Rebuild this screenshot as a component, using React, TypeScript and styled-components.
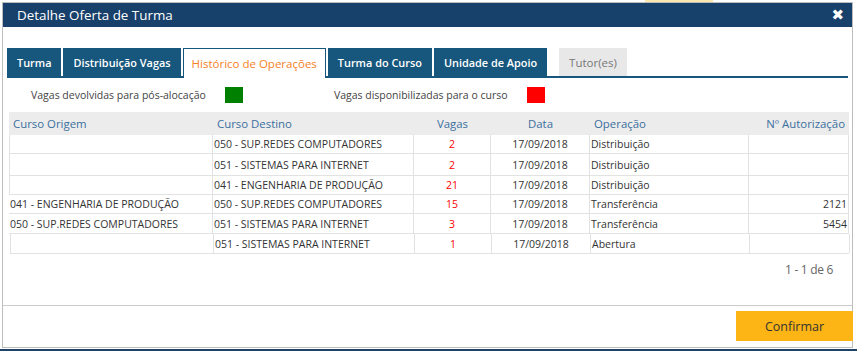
import * as React from 'react';
import styled, { createGlobalStyle, css } from 'styled-components';

const GlobalStyle = createGlobalStyle`
  html, body {
    margin: 0;
    padding: 0;
    background: #ffffff;
    font-family: "Open Sans", "Noto Sans", Arial, sans-serif;
  }
`;

const Page = styled.div`
  position: relative;
  width: 857px;
  height: 353px;
  overflow: hidden;
  padding: 2px 0 0 2px;
  box-sizing: border-box;
`;

const BackdropStrip = styled.div`
  position: absolute;
  left: 0;
  right: 0;
  bottom: 2px;
  height: 2px;
  background: #1d4468;
`;

const BackdropTab = styled.div`
  position: absolute;
  top: 0;
  left: 645px;
  width: 68px;
  height: 2px;
  background: #ffe8b0;
`;

const Dialog = styled.div`
  position: relative;
  width: 851px;
  height: 346px;
  box-sizing: border-box;
  border: 1px solid #bdbdbd;
  background: #ffffff;
  display: flex;
  flex-direction: column;
`;

const TitleBar = styled.div`
  height: 24px;
  background: #17406a;
  color: #ffffff;
  display: flex;
  align-items: center;
  justify-content: space-between;
  padding: 0 8px 0 14px;
  font-size: 13.4px;
`;

const CloseButton = styled.span`
  font-family: "DejaVu Sans", sans-serif;
  font-weight: bold;
  font-size: 15px;
  line-height: 1;
  cursor: pointer;
`;

const Body = styled.div`
  flex: 1;
  padding: 21px 4px 0 4px;
  display: flex;
  flex-direction: column;
`;

const TabBar = styled.div`
  display: flex;
  align-items: flex-end;
  gap: 2px;
  height: 28px;
  border-bottom: 2px solid #17577d;
`;

type TabProps = { $state: 'normal' | 'active' | 'disabled' };

const Tab = styled.div<TabProps>`
  height: 28px;
  box-sizing: border-box;
  padding: 0 10px;
  display: flex;
  align-items: center;
  font-size: 10.9px;
  font-weight: 600;
  ${({ $state }) => $state === 'normal' && css`
    background: #17577d;
    color: #ffffff;
  `}
  ${({ $state }) => $state === 'active' && css`
    background: #ffffff;
    color: #f5821f;
    font-size: 11.5px;
    font-weight: 400;
    border: 1px solid #17577d;
    border-bottom: none;
    height: 30px;
    margin-bottom: -2px;
    padding: 0 8px;
  `}
  ${({ $state }) => $state === 'disabled' && css`
    background: #e8e8e8;
    color: #777777;
    font-size: 11.5px;
    font-weight: 400;
    margin-left: 10px;
  `}
`;

const Legend = styled.div`
  display: flex;
  align-items: center;
  height: 34px;
  padding-left: 24px;
  font-size: 10.5px;
  color: #444444;
`;

const LegendItem = styled.div`
  display: flex;
  align-items: center;
  gap: 19px;
  margin-right: 91px;
`;

const Swatch = styled.span<{ $color: string }>`
  display: inline-block;
  width: 18px;
  height: 16px;
  background: ${({ $color }) => $color};
`;

const Table = styled.div`
  margin: 0 0 0 2px;
  width: 840px;
  font-size: 10.5px;
  color: #333333;
`;

const COLS = '204px 201px 77px 99px 159px 100px';

const HeaderRow = styled.div`
  display: grid;
  grid-template-columns: ${COLS};
  height: 23px;
  align-items: center;
  background: #ececec;
  color: #3a6f9e;
  font-size: 11.4px;
`;

const HeaderCell = styled.div<{ $align?: string }>`
  padding: 0 4px;
  text-align: ${({ $align }) => $align || 'left'};
`;

const Row = styled.div<{ $h: number; $shift?: number }>`
  display: grid;
  grid-template-columns: ${COLS};
  height: ${({ $h }) => $h}px;
  margin-left: ${({ $shift }) => $shift || 0}px;
  border-bottom: 1px solid #e2e2e2;
  box-sizing: border-box;
`;

const Cell = styled.div<{ $align?: string; $red?: boolean; $edge?: boolean }>`
  display: flex;
  align-items: center;
  padding: 0 1px;
  border-right: 1px solid #e2e2e2;
  white-space: nowrap;
  overflow: hidden;
  justify-content: ${({ $align }) => ($align === 'center' ? 'center' : $align === 'right' ? 'flex-end' : 'flex-start')};
  color: ${({ $red }) => ($red ? '#ff0000' : 'inherit')};
  ${({ $edge }) => $edge && css`border-left: 1px solid #e2e2e2;`}
`;

const Pager = styled.div`
  text-align: right;
  padding: 7px 15px 0 0;
  font-size: 12px;
  color: #666666;
  letter-spacing: -0.3px;
`;

const Footer = styled.div`
  height: 42px;
  border-top: 1px solid #cccccc;
  display: flex;
  justify-content: flex-end;
  align-items: flex-start;
  padding-top: 5px;
  box-sizing: border-box;
`;

const ConfirmButton = styled.button`
  width: 117px;
  height: 30px;
  border: none;
  background: #fdb516;
  color: #333333;
  font-family: inherit;
  font-size: 12.5px;
  margin-right: -1px;
  cursor: pointer;
`;

type Op = {
  origem: string;
  destino: string;
  vagas: string;
  data: string;
  operacao: string;
  autorizacao: string;
  h: number;
  edge: boolean;
  shift?: number;
};

const rows: Op[] = [
  { origem: '', destino: '050 - SUP.REDES COMPUTADORES', vagas: '2', data: '17/09/2018', operacao: 'Distribuição', autorizacao: '', h: 19, edge: true },
  { origem: '', destino: '051 - SISTEMAS PARA INTERNET', vagas: '2', data: '17/09/2018', operacao: 'Distribuição', autorizacao: '', h: 22, edge: true },
  { origem: '', destino: '041 - ENGENHARIA DE PRODUÇÃO', vagas: '21', data: '17/09/2018', operacao: 'Distribuição', autorizacao: '', h: 19, edge: true },
  { origem: '041 - ENGENHARIA DE PRODUÇÃO', destino: '050 - SUP.REDES COMPUTADORES', vagas: '15', data: '17/09/2018', operacao: 'Transferência', autorizacao: '2121', h: 19, edge: false },
  { origem: '050 - SUP.REDES COMPUTADORES', destino: '051 - SISTEMAS PARA INTERNET', vagas: '3', data: '17/09/2018', operacao: 'Transferência', autorizacao: '5454', h: 20, edge: false },
  { origem: '', destino: '051 - SISTEMAS PARA INTERNET', vagas: '1', data: '17/09/2018', operacao: 'Abertura', autorizacao: '', h: 20, edge: true, shift: 1 },
];

const App = () => (
  <Page>
    <GlobalStyle />
    <BackdropTab />
    <Dialog>
      <TitleBar>
        <span>Detalhe Oferta de Turma</span>
        <CloseButton>✖</CloseButton>
      </TitleBar>
      <Body>
        <TabBar>
          <Tab $state="normal">Turma</Tab>
          <Tab $state="normal">Distribuição Vagas</Tab>
          <Tab $state="active">Histórico de Operações</Tab>
          <Tab $state="normal">Turma do Curso</Tab>
          <Tab $state="normal">Unidade de Apoio</Tab>
          <Tab $state="disabled">Tutor(es)</Tab>
        </TabBar>
        <Legend>
          <LegendItem>
            <span>Vagas devolvidas para pós-alocação</span>
            <Swatch $color="#008000" />
          </LegendItem>
          <LegendItem>
            <span>Vagas disponibilizadas para o curso</span>
            <Swatch $color="#ff0000" />
          </LegendItem>
        </Legend>
        <Table>
          <HeaderRow>
            <HeaderCell>Curso Origem</HeaderCell>
            <HeaderCell>Curso Destino</HeaderCell>
            <HeaderCell $align="center">Vagas</HeaderCell>
            <HeaderCell $align="center">Data</HeaderCell>
            <HeaderCell>Operação</HeaderCell>
            <HeaderCell $align="right">Nº Autorização</HeaderCell>
          </HeaderRow>
          {rows.map((r, i) => (
            <Row key={i} $h={r.h} $shift={r.shift}>
              <Cell $edge={r.edge}>{r.origem}</Cell>
              <Cell>{r.destino}</Cell>
              <Cell $align="center" $red>{r.vagas}</Cell>
              <Cell $align="center">{r.data}</Cell>
              <Cell>{r.operacao}</Cell>
              <Cell $align="right">{r.autorizacao}</Cell>
            </Row>
          ))}
        </Table>
        <Pager>1 - 1 de 6</Pager>
      </Body>
      <Footer>
        <ConfirmButton>Confirmar</ConfirmButton>
      </Footer>
    </Dialog>
    <BackdropStrip />
  </Page>
);

export default App;
